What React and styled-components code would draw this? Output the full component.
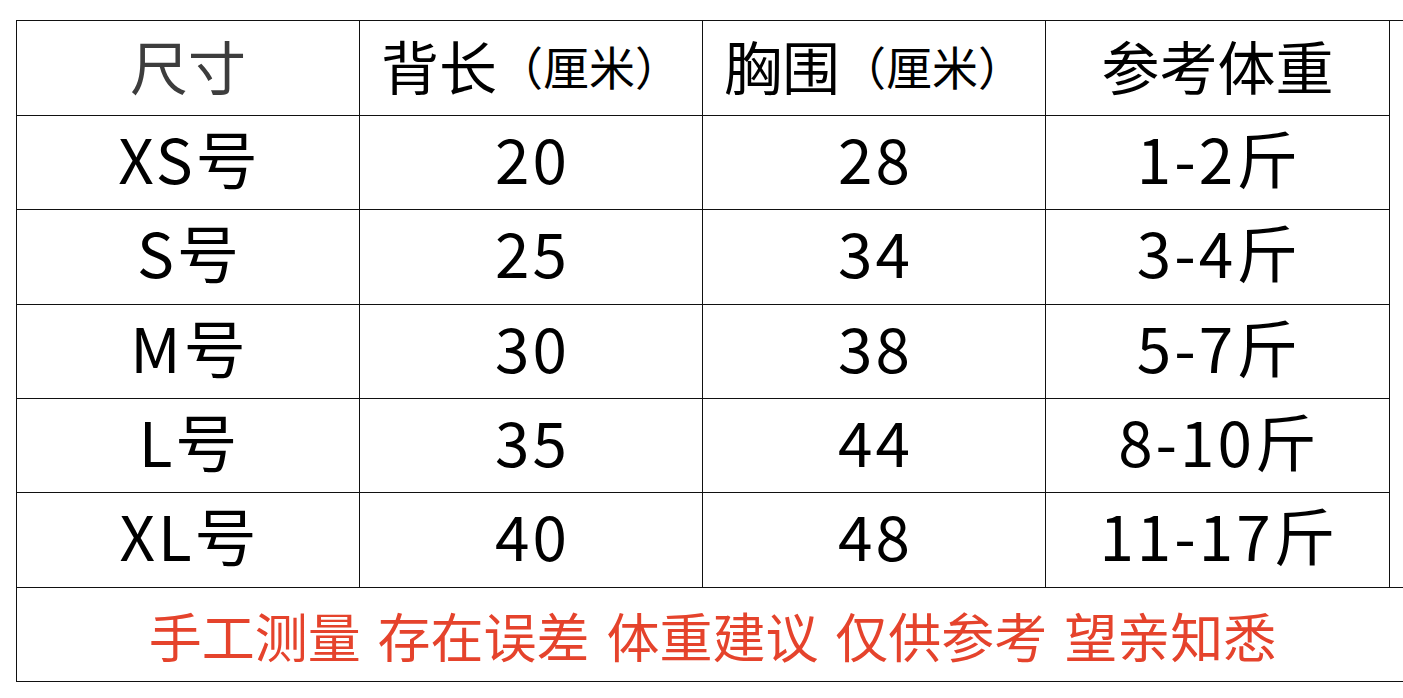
import styled, { createGlobalStyle } from "styled-components";

const GlobalStyle = createGlobalStyle`
    html, body {
        margin: 0;
        padding: 0;
        background: #ffffff;
        overflow: hidden;
    }
`;

const Page = styled.div`
    padding: 20px 0 0 16px;
    font-family: "Noto Sans CJK SC", "Noto Sans", sans-serif;
`;

const Wrapper = styled.div`
    width: 1392px;
    box-sizing: border-box;
    border-top: 1px solid #111;
    border-left: 1px solid #111;
`;

const Row = styled.div`
    display: grid;
    grid-template-columns: 343px 343px 343px 344px;
    height: ${(p) => p.$h}px;
    box-sizing: border-box;
    width: 1373px;

    & + & {
        border-top: 1px solid #111;
    }
`;

const Cell = styled.div`
    display: flex;
    align-items: center;
    justify-content: center;
    box-sizing: border-box;
    border-right: 1px solid #111;
    padding: ${(p) => (p.$head ? "0 0 6px" : "0 0 12px 3px")};
    color: ${(p) => (p.$muted ? "#3d3d3d" : "#000")};
    font-size: ${(p) => (p.$head ? 58 : 62)}px;
    letter-spacing: ${(p) => (p.$head ? 0 : 3)}px;
    line-height: 1;
    white-space: nowrap;
`;

const Unit = styled.span`
    font-size: 46px;
`;

const Note = styled.div`
    height: 95px;
    box-sizing: border-box;
    border-top: 1px solid #111;
    border-bottom: 1px solid #111;
    display: flex;
    align-items: center;
    justify-content: center;
    color: #e5432c;
    font-size: 53px;
    word-spacing: 5px;
    white-space: nowrap;
`;

const rows = [
    { size: "XS号", back: "20", chest: "28", weight: "1-2斤", h: 94 },
    { size: "S号", back: "25", chest: "34", weight: "3-4斤", h: 95 },
    { size: "M号", back: "30", chest: "38", weight: "5-7斤", h: 94 },
    { size: "L号", back: "35", chest: "44", weight: "8-10斤", h: 94 },
    { size: "XL号", back: "40", chest: "48", weight: "11-17斤", h: 95 },
];

export default function App() {
    return (
        <>
            <GlobalStyle />
            <Page>
                <Wrapper>
                    <Row $h={94}>
                        <Cell $head $muted>尺寸</Cell>
                        <Cell $head>
                            背长<Unit>（厘米）</Unit>
                        </Cell>
                        <Cell $head>
                            胸围<Unit>（厘米）</Unit>
                        </Cell>
                        <Cell $head>参考体重</Cell>
                    </Row>
                    {rows.map((r) => (
                        <Row key={r.size} $h={r.h}>
                            <Cell>{r.size}</Cell>
                            <Cell>{r.back}</Cell>
                            <Cell>{r.chest}</Cell>
                            <Cell>{r.weight}</Cell>
                        </Row>
                    ))}
                    <Note>手工测量 存在误差 体重建议 仅供参考 望亲知悉</Note>
                </Wrapper>
            </Page>
        </>
    );
}
